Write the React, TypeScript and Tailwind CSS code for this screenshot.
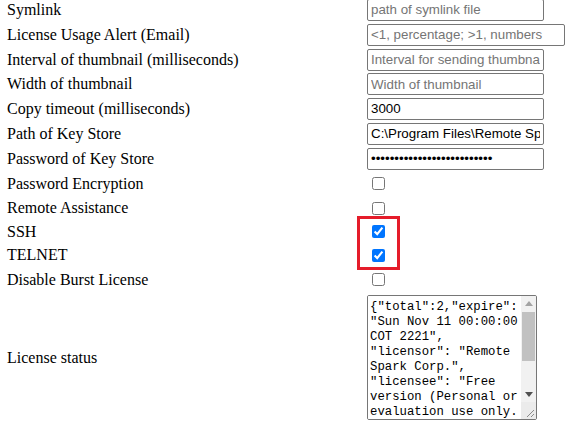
import React from "react";

type Field =
  | { label: string; h: string; kind: "text"; placeholder?: string; value?: string; wide?: boolean }
  | { label: string; h: string; kind: "password"; value: string }
  | { label: string; h: string; kind: "check"; checked: boolean };

const fields: Field[] = [
  { label: "Symlink", h: "h-[25px]", kind: "text", placeholder: "path of symlink file" },
  { label: "License Usage Alert (Email)", h: "h-[25px]", kind: "text", placeholder: "<1, percentage; >1, numbers", wide: true },
  { label: "Interval of thumbnail (milliseconds)", h: "h-[25px]", kind: "text", placeholder: "Interval for sending thumbnail" },
  { label: "Width of thumbnail", h: "h-[24px]", kind: "text", placeholder: "Width of thumbnail" },
  { label: "Copy timeout (milliseconds)", h: "h-[25px]", kind: "text", value: "3000" },
  { label: "Path of Key Store", h: "h-[25px]", kind: "text", value: "C:\\Program Files\\Remote Spark\\SparkGateway\\keystore" },
  { label: "Password of Key Store", h: "h-[25px]", kind: "password", value: "abcdefghijklmnopqrstuvwxyz" },
  { label: "Password Encryption", h: "h-[25px]", kind: "check", checked: false },
  { label: "Remote Assistance", h: "h-[24px]", kind: "check", checked: false },
  { label: "SSH", h: "h-[23px]", kind: "check", checked: true },
  { label: "TELNET", h: "h-[24px]", kind: "check", checked: true },
  { label: "Disable Burst License", h: "h-[25px]", kind: "check", checked: false },
];

const licenseText = [
  '{"total":2,"expire":',
  '"Sun Nov 11 00:00:00',
  'COT 2221",',
  '"licensor": "Remote',
  'Spark Corp.",',
  '"licensee": "Free',
  "version (Personal or",
  "evaluation use only.",
  ')",',
  '"type": "Free",',
  '"maxSession": 2,',
  '"version": "6.0",',
  '"feature": {',
  '"ssh": true,',
  '"telnet": true,',
  '"vnc": true',
  "}",
  "}",
].join("\n");

const inputClass =
  "h-[22px] border border-[#767676] rounded-[2px] px-[3px] font-['Liberation_Sans',Arial,sans-serif] text-[13.33px] text-black placeholder:text-[#757575] outline-none bg-white";

function LicenseBox() {
  return (
    <div className="w-[170px] h-[125px] border border-[#767676] rounded-[2px] flex bg-white overflow-hidden">
      <textarea
        readOnly
        defaultValue={licenseText}
        className="flex-1 min-w-0 h-full resize-none overflow-hidden whitespace-pre pl-[2px] pt-[4px] font-['Liberation_Mono','Courier_New',monospace] text-[12.3px] leading-[15px] text-black bg-white outline-none"
      />
      {/* fake scrollbar */}
      <div className="w-[15px] flex flex-col bg-[#f1f1f1]">
        <div className="h-[15px] flex items-center justify-center">
          <svg width="8" height="5" viewBox="0 0 8 5">
            <path d="M4 0 L8 5 L0 5 Z" fill="#a3a3a3" />
          </svg>
        </div>
        <div className="h-[49px] mt-[1px] mx-[1px] bg-[#c1c1c1]" />
        <div className="flex-1" />
        <div className="h-[15px] flex items-center justify-center">
          <svg width="8" height="5" viewBox="0 0 8 5">
            <path d="M0 0 L8 0 L4 5 Z" fill="#505050" />
          </svg>
        </div>
        <div className="h-[17px] flex items-end justify-end bg-[#ebebeb]">
          <svg width="10" height="10" viewBox="0 0 10 10" className="mb-[1px] mr-[1px]">
            <path d="M9 2 L2 9 M9 6 L6 9" stroke="#8a8a8a" strokeWidth="1" />
          </svg>
        </div>
      </div>
    </div>
  );
}

export default function App() {
  return (
    <div className="relative w-[567px] h-[431px] overflow-hidden bg-white font-['Liberation_Serif','Times_New_Roman',serif] text-[16px] text-black">
      <div className="-mt-[3px] flex flex-col">
        {fields.map((f) => (
          <div key={f.label} className={"flex items-center " + f.h}>
            <div className="w-[367px] pl-[7px] leading-[18px]">{f.label}</div>
            <div className="flex items-center">
              {f.kind === "text" && (
                <input
                  type="text"
                  readOnly
                  placeholder={f.placeholder}
                  defaultValue={f.value}
                  className={inputClass + (f.wide ? " w-[198px]" : " w-[177px]")}
                />
              )}
              {f.kind === "password" && (
                <input type="password" readOnly defaultValue={f.value} className={inputClass + " w-[177px]"} />
              )}
              {f.kind === "check" && (
                <input type="checkbox" defaultChecked={f.checked} className="ml-[5px] w-[13px] h-[13px]" />
              )}
            </div>
          </div>
        ))}
        <div className="flex items-center h-[131px]">
          <div className="w-[367px] pl-[7px] leading-[18px]">License status</div>
          <LicenseBox />
        </div>
      </div>
      <div className="absolute left-[357px] top-[216px] w-[43px] h-[54px] border-[3px] border-[#e51c2a]" />
    </div>
  );
}
